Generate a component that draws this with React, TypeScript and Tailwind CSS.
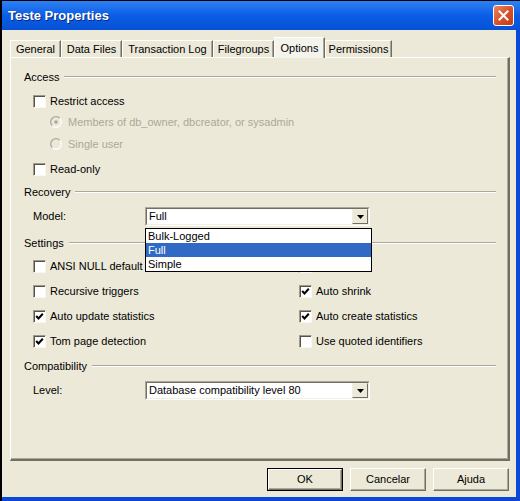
import React from 'react'

const tabs = [
  { label: 'General', w: 'w-[51px]' },
  { label: 'Data Files', w: 'w-[61px]' },
  { label: 'Transaction Log', w: 'w-[91px]' },
  { label: 'Filegroups', w: 'w-[61px]' },
  { label: 'Options', w: 'w-[51px]', active: true },
  { label: 'Permissions', w: 'w-[67px]' },
]

function CheckBox({ checked }: { checked?: boolean }) {
  return (
    <span className="w-[13px] h-[13px] shrink-0 flex items-center justify-center bg-white border border-t-[#9d9a8a] border-l-[#9d9a8a] border-r-[#f8f7f0] border-b-[#f8f7f0] shadow-[inset_1px_1px_0_#55534a]">
      {checked && (
        <svg width="9" height="9" viewBox="0 0 9 9">
          <path d="M1.2 4 L3.5 6.5 L7.8 1.8" stroke="#000" strokeWidth="2" fill="none" />
        </svg>
      )}
    </span>
  )
}

function Radio({ selected }: { selected?: boolean }) {
  return (
    <svg width="12" height="12" viewBox="0 0 12 12" className="shrink-0">
      <defs>
        <linearGradient id="rg" x1="0" y1="0" x2="1" y2="1">
          <stop offset="0.45" stopColor="#aca899" />
          <stop offset="0.55" stopColor="#ffffff" />
        </linearGradient>
      </defs>
      <circle cx="6" cy="6" r="5.3" fill="#ece9d8" stroke="url(#rg)" strokeWidth="1.3" />
      {selected && <circle cx="6" cy="6" r="1.8" fill="#aca899" />}
    </svg>
  )
}

function Check({ label, checked }: { label: string; checked?: boolean }) {
  return (
    <div className="h-[16px] flex items-center gap-[4px] whitespace-nowrap">
      <CheckBox checked={checked} />
      <span>{label}</span>
    </div>
  )
}

function GroupHeader({ title, className = '' }: { title: string; className?: string }) {
  return (
    <div className={`h-[16px] flex items-center gap-[5px] ${className}`}>
      <span>{title}</span>
      <div className="flex-1 h-[2px] border-t border-t-[#aca899] border-b border-b-white" />
    </div>
  )
}

function Combo({ value, className = '' }: { value: string; className?: string }) {
  return (
    <div className={`w-[225px] h-[19px] bg-white border border-t-[#aca899] border-l-[#aca899] border-r-white border-b-white ${className}`}>
      <div className="h-full flex items-center border border-t-[#716f64] border-l-[#716f64] border-r-[#f1efe2] border-b-[#f1efe2]">
        <span className="flex-1 pl-[2px] whitespace-nowrap">{value}</span>
        <div className="w-[16px] h-full flex items-center justify-center bg-[#ece9d8] border border-t-[#f1efe2] border-l-[#f1efe2] border-r-[#716f64] border-b-[#716f64]">
          <svg width="7" height="4" viewBox="0 0 7 4">
            <path d="M0 0 H7 L3.5 4 Z" fill="#000" />
          </svg>
        </div>
      </div>
    </div>
  )
}

function Button({ label, isDefault }: { label: string; isDefault?: boolean }) {
  return (
    <div className={`w-[76px] h-[23px] ${isDefault ? 'border border-black' : ''}`}>
      <div className="h-full flex items-center justify-center bg-[#ece9d8] border border-t-white border-l-white border-r-[#716f64] border-b-[#716f64] shadow-[inset_-1px_-1px_0_#aca899]">
        {label}
      </div>
    </div>
  )
}

export default function App() {
  return (
    <div className="w-[520px] h-[501px] flex flex-col bg-[#0b48d6] border-l-2 border-t border-black font-['Liberation_Sans',Arial,sans-serif] text-[11px] text-black overflow-hidden">
      {/* title bar */}
      <div className="h-[29px] shrink-0 flex items-center justify-between bg-gradient-to-b from-[#2e80f2] via-[#0a5de6] to-[#0652d6]">
        <span className="pl-[6px] text-white font-bold text-[13px] [text-shadow:1px_1px_#0a2a7a]">Teste Properties</span>
        <div className="mr-[6px] w-[21px] h-[21px] rounded-[3px] border border-white bg-gradient-to-br from-[#e98563] via-[#d9522a] to-[#c23a12] flex items-center justify-center">
          <svg width="11" height="11" viewBox="0 0 11 11">
            <path d="M1.5 1.5 L9.5 9.5 M9.5 1.5 L1.5 9.5" stroke="#fff" strokeWidth="2" strokeLinecap="square" />
          </svg>
        </div>
      </div>

      {/* body */}
      <div className="flex-1 mr-[4px] mb-[4px] bg-[#ece9d8] flex flex-col pl-[8px] pr-[6px] pt-[7px]">
        {/* tabs */}
        <div className="h-[20px] flex items-end">
          {tabs.map((t) =>
            t.active ? (
              <div
                key={t.label}
                className={`${t.w} h-[21px] -mb-px relative z-10 flex items-center justify-center bg-[#f4f3ec] border-t border-l border-white border-r border-r-[#716f64] shadow-[inset_-1px_0_0_#aca899]`}
              >
                {t.label}
              </div>
            ) : (
              <div
                key={t.label}
                className={`${t.w} h-[17px] flex items-center justify-center border-t border-l border-white border-r border-r-[#716f64] shadow-[inset_-1px_0_0_#aca899]`}
              >
                {t.label}
              </div>
            )
          )}
        </div>

        {/* panel */}
        <div className="h-[404px] flex flex-col pl-[13px] pr-[12px] pt-[11px] border-t border-l border-white border-r-2 border-b-2 border-r-[#716f64] border-b-[#716f64] shadow-[inset_-1px_-1px_0_#aca899]">
          <GroupHeader title="Access" />
          <div className="pl-[9px] flex flex-col">
            <div className="mt-[8px]">
              <Check label="Restrict access" />
            </div>
            <div className="mt-[5px] h-[16px] flex items-center gap-[6px] pl-[17px] text-[#aca899] whitespace-nowrap">
              <Radio selected />
              <span>Members of db_owner, dbcreator, or sysadmin</span>
            </div>
            <div className="mt-[6px] h-[16px] flex items-center gap-[6px] pl-[17px] text-[#aca899]">
              <Radio />
              <span>Single user</span>
            </div>
            <div className="mt-[9px]">
              <Check label="Read-only" />
            </div>
          </div>

          <GroupHeader title="Recovery" className="mt-[7px]" />
          <div className="mt-[7px] pl-[9px] h-[19px] flex items-center">
            <span className="w-[112px]">Model:</span>
            <div className="relative">
              <Combo value="Full" />
              <div className="absolute left-0 top-[21px] z-20 w-[227px] border border-black bg-white">
                <div className="h-[14px] flex items-center pl-[2px]">Bulk-Logged</div>
                <div className="h-[14px] flex items-center pl-[2px] bg-[#316ac5] text-white">Full</div>
                <div className="h-[14px] flex items-center pl-[2px]">Simple</div>
              </div>
            </div>
          </div>

          <GroupHeader title="Settings" className="mt-[9px]" />
          <div className="pl-[9px] flex flex-col">
            <div className="mt-[7px] flex">
              <div className="w-[266px]"><Check label="ANSI NULL default" /></div>
              <Check label="Auto close" />
            </div>
            <div className="mt-[9px] flex">
              <div className="w-[266px]"><Check label="Recursive triggers" /></div>
              <Check label="Auto shrink" checked />
            </div>
            <div className="mt-[9px] flex">
              <div className="w-[266px]"><Check label="Auto update statistics" checked /></div>
              <Check label="Auto create statistics" checked />
            </div>
            <div className="mt-[9px] flex">
              <div className="w-[266px]"><Check label="Tom page detection" checked /></div>
              <Check label="Use quoted identifiers" />
            </div>
          </div>

          <GroupHeader title="Compatibility" className="mt-[9px]" />
          <div className="mt-[7px] pl-[9px] h-[19px] flex items-center">
            <span className="w-[112px]">Level:</span>
            <Combo value="Database compatibility level 80" />
          </div>
        </div>

        {/* buttons */}
        <div className="mt-[7px] flex justify-end gap-[7px] pr-[1px]">
          <Button label="OK" isDefault />
          <Button label="Cancelar" />
          <Button label="Ajuda" />
        </div>
      </div>
    </div>
  )
}
